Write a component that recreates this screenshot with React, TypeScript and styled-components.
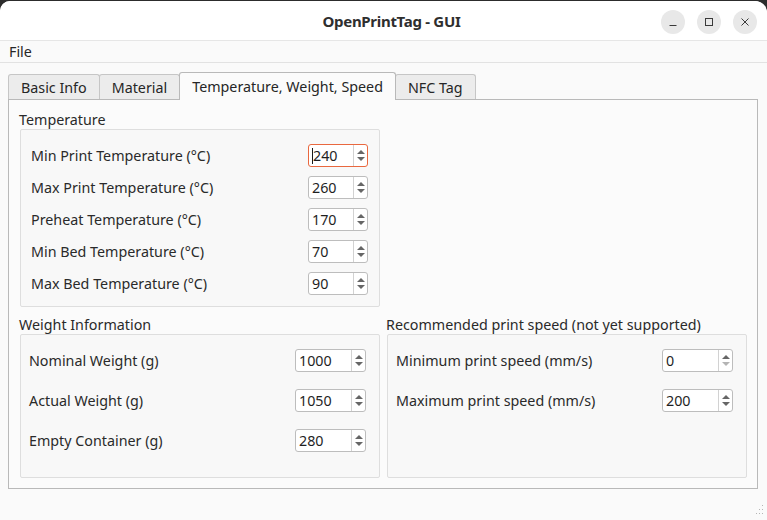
import React from 'react';
import styled, { createGlobalStyle } from 'styled-components';

const GlobalStyle = createGlobalStyle`
  html, body {
    margin: 0;
    padding: 0;
    background: #2c2c2c;
  }
  body {
    font-family: "Noto Sans", "DejaVu Sans", sans-serif;
    font-size: 14.3px;
    color: #303030;
  }
`;

type Field = {
  label: string;
  value: number;
  focused?: boolean;
  atMin?: boolean;
};

const temperatureFields: Field[] = [
  { label: 'Min Print Temperature (°C)', value: 240, focused: true },
  { label: 'Max Print Temperature (°C)', value: 260 },
  { label: 'Preheat Temperature (°C)', value: 170 },
  { label: 'Min Bed Temperature (°C)', value: 70 },
  { label: 'Max Bed Temperature (°C)', value: 90 },
];

const weightFields: Field[] = [
  { label: 'Nominal Weight (g)', value: 1000 },
  { label: 'Actual Weight (g)', value: 1050 },
  { label: 'Empty Container (g)', value: 280 },
];

const speedFields: Field[] = [
  { label: 'Minimum print speed (mm/s)', value: 0, atMin: true },
  { label: 'Maximum print speed (mm/s)', value: 200 },
];

const tabs = ['Basic Info', 'Material', 'Temperature, Weight, Speed', 'NFC Tag'];

const SpinBox = ({ field, width }: { field: Field; width: number }) => (
  <Spin $w={width} $focused={!!field.focused}>
    <SpinText>
      {field.focused && <Caret />}
      {field.value}
    </SpinText>
    <SpinArrows>
      <ArrowUp />
      <ArrowDown $disabled={!!field.atMin} />
    </SpinArrows>
  </Spin>
);

const FormBox = ({
  fields,
  spinWidth,
  gap,
  pad,
}: {
  fields: Field[];
  spinWidth: number;
  gap: number;
  pad: string;
}) => (
  <Box $gap={gap} $pad={pad}>
    {fields.map((f) => (
      <Row key={f.label}>
        <Label>{f.label}</Label>
        <SpinBox field={f} width={spinWidth} />
      </Row>
    ))}
  </Box>
);

const App = () => {
  return (
    <Page>
      <GlobalStyle />
      <Window>
        <TitleBar>
          <span />
          <Title>OpenPrintTag - GUI</Title>
          <WinButtons>
            <WinButton>
              <svg width="16" height="16" viewBox="0 0 16 16">
                <line x1="4.5" y1="11.5" x2="11.5" y2="11.5" stroke="#3a3a3a" strokeWidth="1" />
              </svg>
            </WinButton>
            <WinButton>
              <svg width="16" height="16" viewBox="0 0 16 16">
                <rect x="4.5" y="4.5" width="7" height="7" fill="none" stroke="#3a3a3a" strokeWidth="1" />
              </svg>
            </WinButton>
            <WinButton>
              <svg width="16" height="16" viewBox="0 0 16 16">
                <path d="M4.5 4.5 L11.5 11.5 M11.5 4.5 L4.5 11.5" stroke="#3a3a3a" strokeWidth="1" />
              </svg>
            </WinButton>
          </WinButtons>
        </TitleBar>

        <MenuBar>
          <MenuItem>File</MenuItem>
        </MenuBar>

        <Content>
          <TabBar>
            {tabs.map((t, i) => (
              <Tab key={t} $active={i === 2}>
                {t}
              </Tab>
            ))}
          </TabBar>

          <Pane>
            <Group>
              <GroupTitle>Temperature</GroupTitle>
              <FormBox fields={temperatureFields} spinWidth={60} gap={9} pad="14px 11px 11px 10px" />
            </Group>
            <span />
            <Group>
              <GroupTitle>Weight Information</GroupTitle>
              <FormBox fields={weightFields} spinWidth={71} gap={17} pad="14px 13px 10px 8px" />
            </Group>
            <Group>
              <GroupTitle>Recommended print speed (not yet supported)</GroupTitle>
              <FormBox fields={speedFields} spinWidth={71} gap={17} pad="14px 13px 10px 8px" />
            </Group>
          </Pane>
        </Content>

        <StatusBar>
          <svg width="10" height="16" viewBox="0 0 10 16">
            <rect x="7" y="3" width="1" height="1" fill="#b5b5b5" />
            <rect x="7" y="7" width="1" height="1" fill="#b5b5b5" />
            <rect x="4" y="7" width="1" height="1" fill="#b5b5b5" />
            <rect x="7" y="11" width="1" height="1" fill="#b5b5b5" />
            <rect x="4" y="11" width="1" height="1" fill="#b5b5b5" />
            <rect x="1" y="11" width="1" height="1" fill="#b5b5b5" />
          </svg>
        </StatusBar>
      </Window>
    </Page>
  );
};

const Page = styled.div`
  width: 767px;
  height: 520px;
  padding-top: 1px;
  box-sizing: border-box;
  background: #2c2c2c;
  overflow: hidden;
`;

const Window = styled.div`
  height: 519px;
  background: #fafafa;
  border-radius: 10px 12px 0 0;
  overflow: hidden;
  display: flex;
  flex-direction: column;
`;

const TitleBar = styled.div`
  height: 39px;
  flex-shrink: 0;
  background: #ffffff;
  border-bottom: 1px solid #e6e6e6;
  display: grid;
  grid-template-columns: 1fr auto 1fr;
  align-items: center;
  padding: 0 10px 0 0;
`;

const Title = styled.div`
  font-weight: 700;
  font-size: 15px;
  color: #2e2e2e;
  margin-left: 26px;
  letter-spacing: -0.3px;
  padding-top: 1px;
`;

const WinButtons = styled.div`
  display: flex;
  justify-content: flex-end;
  gap: 12px;
  padding-top: 2px;
`;

const WinButton = styled.div`
  width: 24px;
  height: 24px;
  border-radius: 50%;
  background: #e8e8e8;
  display: flex;
  align-items: center;
  justify-content: center;
`;

const MenuBar = styled.div`
  height: 21px;
  flex-shrink: 0;
  background: #fafafa;
  border-bottom: 1px solid #e2e2e2;
  display: flex;
  align-items: center;
  padding-left: 9px;
`;

const MenuItem = styled.span`
  color: #262626;
`;

const Content = styled.div`
  padding: 9px 9px 0 8px;
  display: flex;
  flex-direction: column;
`;

const TabBar = styled.div`
  display: flex;
  align-items: flex-end;
  height: 28px;
  margin-bottom: -1px;
  position: relative;
  z-index: 1;
`;

const Tab = styled.div<{ $active: boolean }>`
  box-sizing: border-box;
  height: ${(p) => (p.$active ? '28px' : '25px')};
  margin-bottom: ${(p) => (p.$active ? '0' : '1px')};
  padding: 0 12px;
  margin-left: -1px;
  display: flex;
  align-items: center;
  padding-top: ${(p) => (p.$active ? '0' : '1px')};
  background: ${(p) => (p.$active ? '#fbfbfb' : '#ececec')};
  border: 1px solid ${(p) => (p.$active ? '#b9b9b9' : '#c6c6c6')};
  border-bottom: none;
  border-radius: 3px 3px 0 0;
  color: #262626;
  white-space: nowrap;
  position: relative;
  z-index: ${(p) => (p.$active ? 2 : 0)};

  &:first-child {
    margin-left: 0;
  }
`;

const Pane = styled.div`
  box-sizing: border-box;
  width: 750px;
  height: 390px;
  border: 1px solid #b9b9b9;
  background: #fbfbfb;
  padding: 10px 10px 10px 11px;
  display: grid;
  grid-template-columns: 1fr 1fr;
  grid-template-rows: auto 1fr;
  column-gap: 7px;
  row-gap: 8px;
`;

const Group = styled.div`
  display: flex;
  flex-direction: column;
  min-height: 0;
`;

const GroupTitle = styled.div`
  line-height: 19px;
  height: 19px;
  margin-left: -1px;
  color: #2a2a2a;
  white-space: nowrap;
`;

const Box = styled.div<{ $gap: number; $pad: string }>`
  flex: 1;
  border: 1px solid #dedede;
  border-radius: 2px;
  background: #f8f8f8;
  padding: ${(p) => p.$pad};
  display: flex;
  flex-direction: column;
  gap: ${(p) => p.$gap}px;
`;

const Row = styled.div`
  display: flex;
  align-items: center;
  justify-content: space-between;
  height: 23px;
`;

const Label = styled.span`
  color: #2a2a2a;
  white-space: nowrap;
`;

const Spin = styled.div<{ $w: number; $focused: boolean }>`
  box-sizing: border-box;
  width: ${(p) => p.$w}px;
  height: 23px;
  border: 1px solid ${(p) => (p.$focused ? '#e9683f' : '#bdbdbd')};
  border-radius: 3px;
  background: #ffffff;
  display: flex;
`;

const SpinText = styled.div`
  flex: 1;
  display: flex;
  align-items: center;
  padding-left: 3px;
  color: #1f1f1f;
`;

const Caret = styled.span`
  width: 1px;
  height: 16px;
  background: #1a1a1a;
`;

const SpinArrows = styled.div`
  width: 13px;
  border-left: 1px solid #d2d2d2;
  display: flex;
  flex-direction: column;
  align-items: center;
  justify-content: center;
  gap: 3px;
`;

const ArrowUp = styled.span`
  width: 0;
  height: 0;
  border-left: 4px solid transparent;
  border-right: 4px solid transparent;
  border-bottom: 4px solid #666666;
`;

const ArrowDown = styled.span<{ $disabled: boolean }>`
  width: 0;
  height: 0;
  border-left: 4px solid transparent;
  border-right: 4px solid transparent;
  border-top: 4px solid ${(p) => (p.$disabled ? '#b4b4b4' : '#666666')};
`;

const StatusBar = styled.div`
  flex: 1;
  display: flex;
  justify-content: flex-end;
  align-items: flex-end;
  padding: 0 2px 2px 0;
`;

export default App;
